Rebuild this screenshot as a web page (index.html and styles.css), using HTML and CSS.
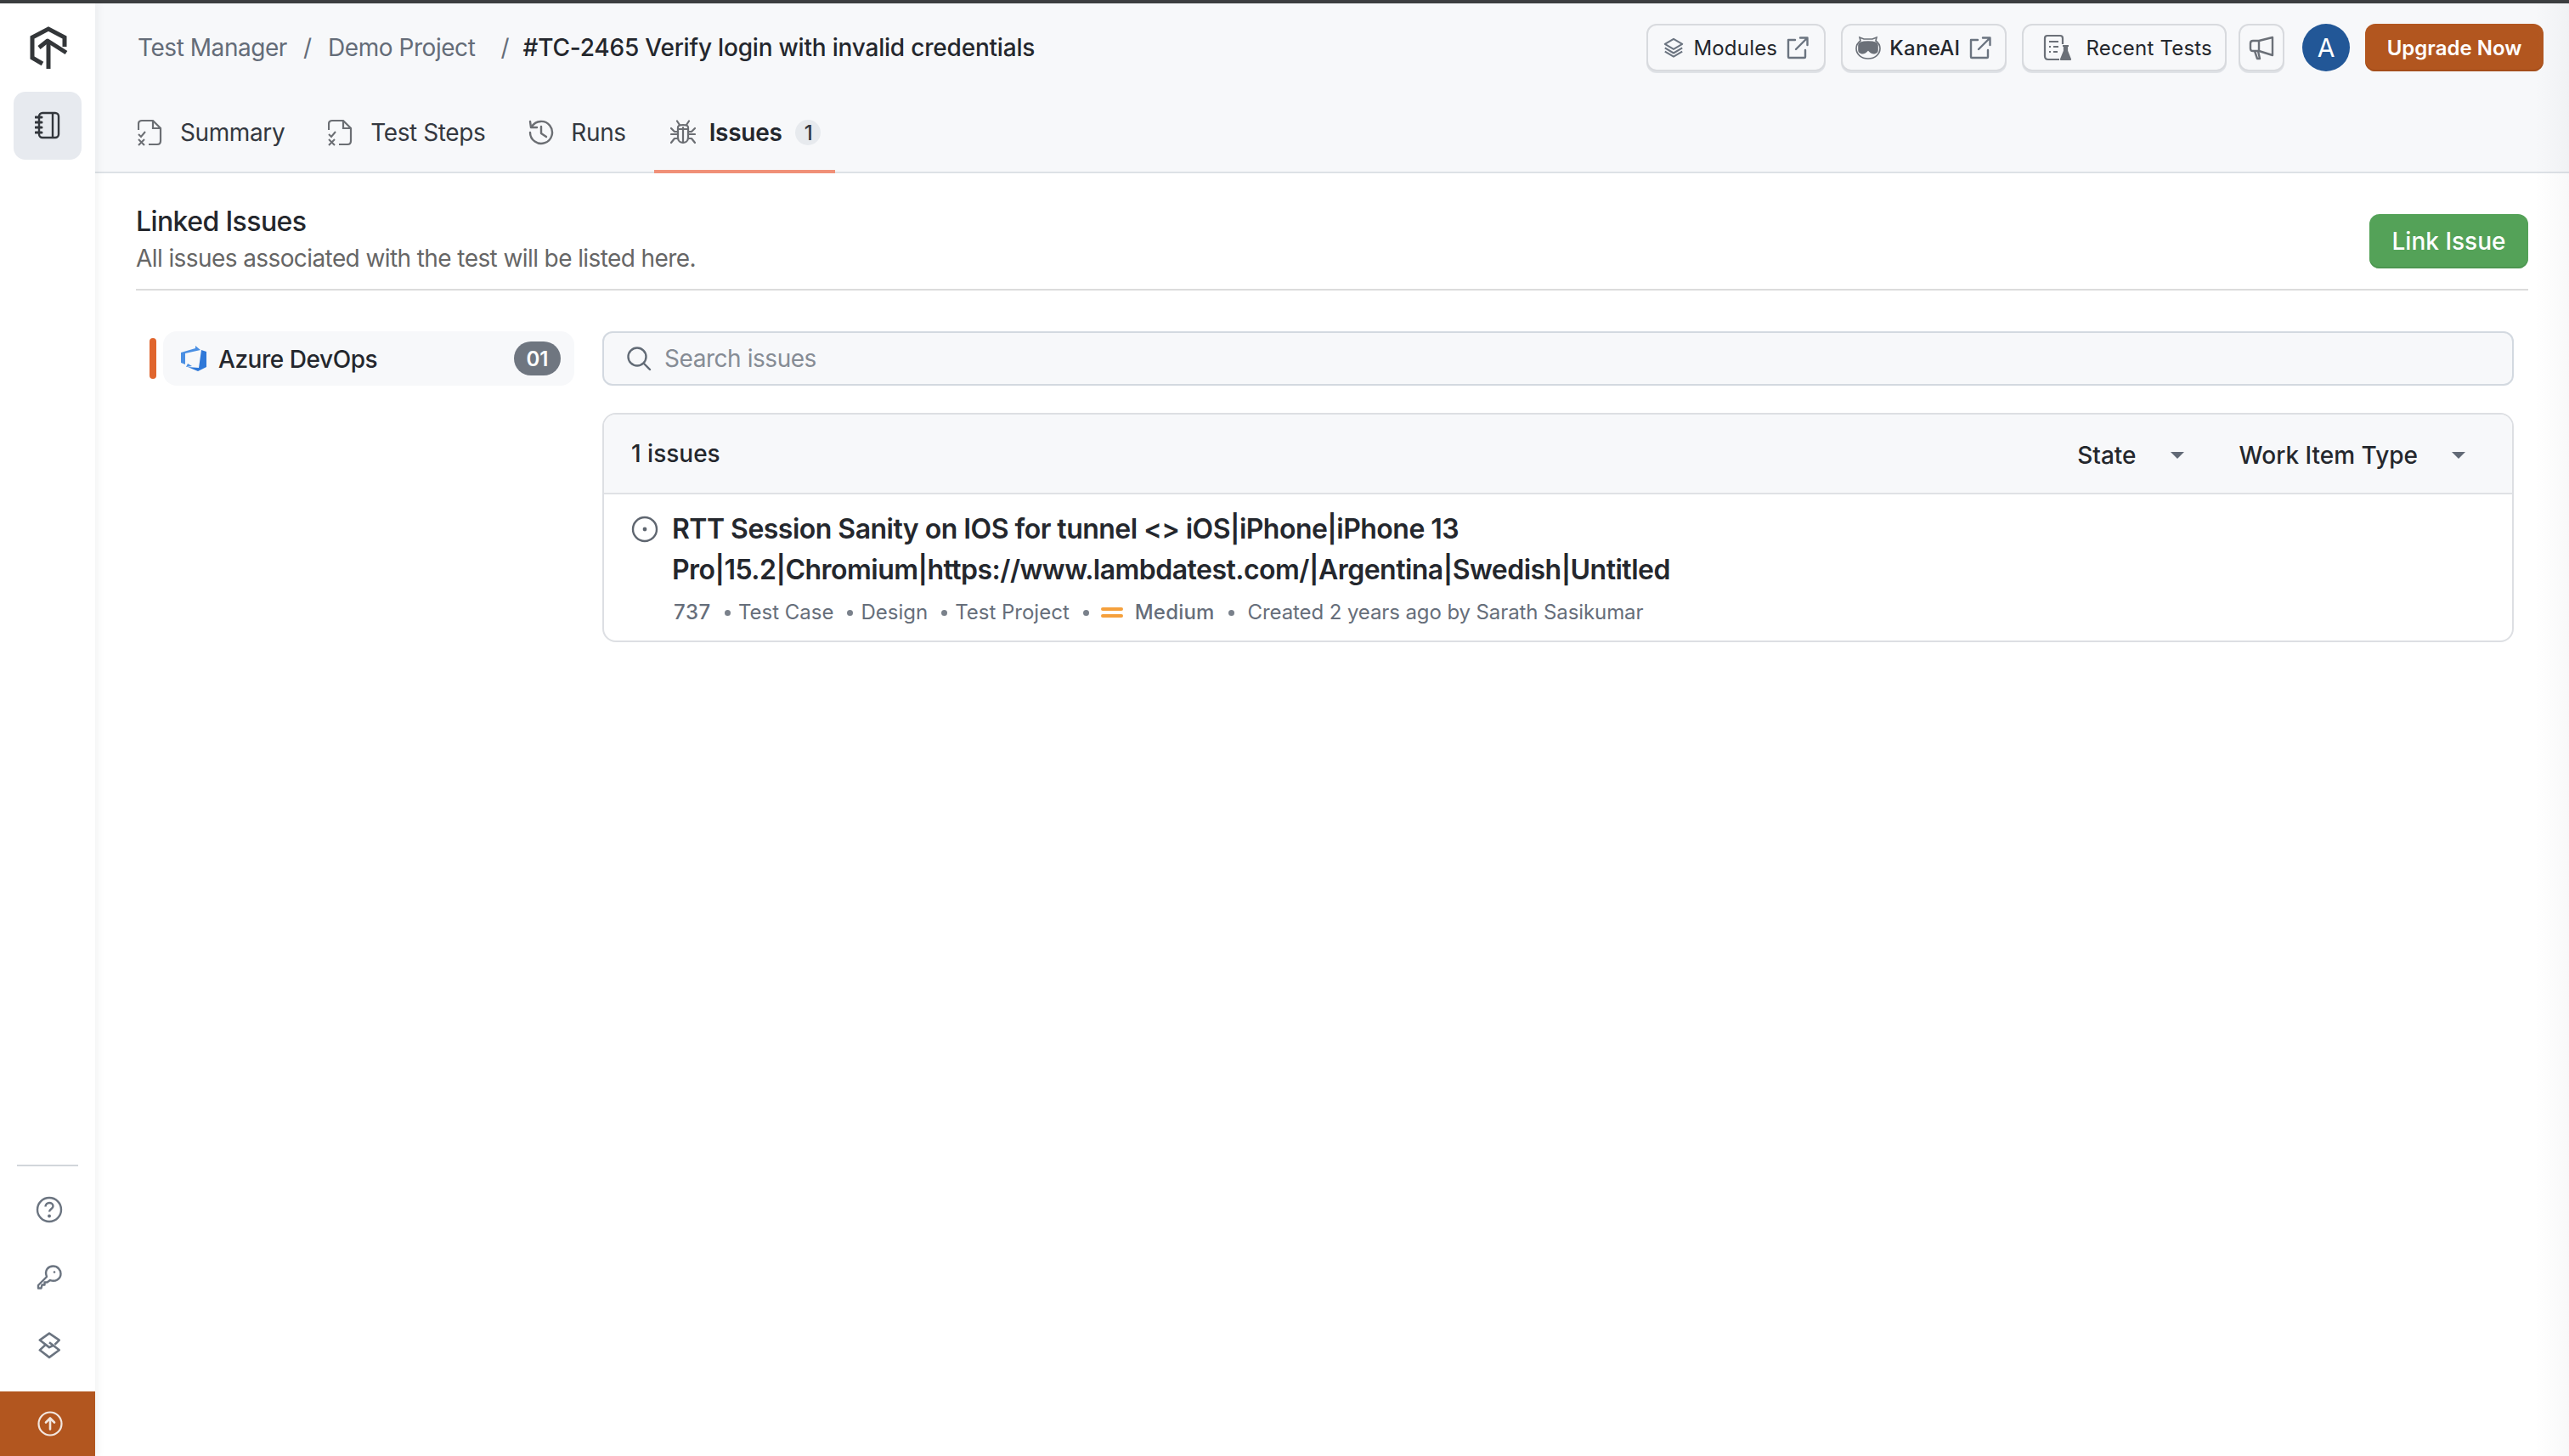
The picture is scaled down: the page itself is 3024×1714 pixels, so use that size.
FILE: index.html
```html
<!DOCTYPE html>
<html lang="en">
<head>
<meta charset="utf-8">
<title>Linked Issues</title>
<link rel="stylesheet" href="styles.css">
</head>
<body>
<div class="topline"></div>
<div class="app">
  <aside class="sidebar">
    <div class="logo">
      <svg width="46" height="50" viewBox="0 0 46 50" fill="none" stroke="#333639" stroke-width="5">
        <path d="M15 44 L3 37 V13 L22 3 L41 13 V24"/>
        <path d="M22 50 V20"/>
        <path d="M11 25 L21 17 L43 31" stroke-linejoin="round"/>
      </svg>
    </div>
    <div class="side-active">
      <svg width="30" height="34" viewBox="0 0 30 34" fill="none" stroke="#33373d" stroke-width="2.4">
        <rect x="5" y="2" width="23" height="29" rx="4"/>
        <path d="M21 2 V31"/>
        <path d="M1 7 H8 M1 13 H8 M1 19 H8 M1 25 H8" stroke-linecap="round" stroke-width="3"/>
      </svg>
    </div>
    <div class="side-spacer"></div>
    <div class="side-rule"></div>
    <div class="side-icons">
      <svg width="32" height="32" viewBox="0 0 32 32" fill="none" stroke="#6b7480" stroke-width="2.4">
        <circle cx="16" cy="16" r="14"/>
        <path d="M11.5 12.5 C11.5 6.5 20.5 6.5 20.5 12 C20.5 15 16 15.5 16 18.5"/>
        <circle cx="16" cy="23.5" r="2" fill="#6b7480" stroke="none"/>
      </svg>
      <svg width="30" height="30" viewBox="0 0 30 30" fill="none" stroke="#6b7480" stroke-width="2.4" stroke-linejoin="round">
        <path d="M2 24 L12 14 C9 6 14 1.500 19.500 1.500 C25 1.500 28.500 6 28.500 10.500 C28.500 16.500 22 20.500 16 18 L12.500 20.500 H9.500 V23.500 H6.500 L5.500 27.500 H2 Z"/>
        <circle cx="21" cy="8.500" r="1.300" fill="#6b7480" stroke="none"/>
      </svg>
      <svg width="26" height="32" viewBox="0 0 24 30" fill="none" stroke="#6b7480" stroke-width="2.4" stroke-linejoin="round">
        <path d="M18 14 L23 9 L12 1.500 L1.500 9 L12 17 L16 15"/>
        <path d="M8 14 L1.500 20 L12 28 L23 20 L12 11.500"/>
      </svg>
    </div>
    <div class="side-upgrade">
      <svg width="30" height="30" viewBox="0 0 30 30" fill="none" stroke="#f2e6df" stroke-width="2.2" stroke-linecap="round" stroke-linejoin="round">
        <circle cx="15" cy="15" r="13.500"/>
        <path d="M15 21.500 V9 M10 13.500 L15 8.500 L20 13.500" stroke-width="2.600"/>
      </svg>
    </div>
  </aside>

  <main class="main">
    <header class="header">
      <div class="header-top">
        <nav class="crumbs">
          <span class="crumb">Test Manager</span>
          <span class="crumb-sep">/</span>
          <span class="crumb">Demo Project</span>
          <span class="crumb-sep crumb-sep-last">/</span>
          <span class="crumb-current">#TC-2465 Verify login with invalid credentials</span>
        </nav>
        <div class="actions">
          <button class="btn btn-modules">
            <svg width="26" height="28" viewBox="0 0 28 28" fill="none" stroke="#6b7480" stroke-width="2.2" stroke-linejoin="round">
              <path d="M14 3 L25 9.500 L14 16 L3 9.500 Z"/>
              <path d="M3 14.500 L14 21 L25 14.500"/>
              <path d="M3 19 L14 25.500 L25 19"/>
            </svg>
            <span>Modules</span>
            <svg class="ext" width="28" height="28" viewBox="0 0 28 28" fill="none" stroke="#6b7480" stroke-width="2.400" stroke-linecap="round" stroke-linejoin="round">
              <path d="M11 5 H3 V25 Q3 26 4 26 H22 Q23 26 23 25 V17"/>
              <path d="M12 16 L25 3 M17 2.500 H25.500 V11"/>
            </svg>
          </button>
          <button class="btn btn-kane">
            <svg width="30" height="28" viewBox="0 0 30 28" fill="none" stroke="#6b7078" stroke-width="1.600">
              <path d="M6 6 L5 2 L10 4 H20 L25 2 L24 6 C28 9 29 13 29 15 C29 22 23 27 15 27 C7 27 1 22 1 15 C1 13 2 9 6 6 Z"/>
              <path d="M4 11 C4 8 8 7 15 7 C22 7 26 8 26 11 V17 C26 21 21 21 19 20 C17 19 16 17 15 17 C14 17 13 19 11 20 C9 21 4 21 4 17 Z" fill="#6b7078"/>
            </svg>
            <span class="kane-label">KaneAI</span>
            <svg class="ext" width="28" height="28" viewBox="0 0 28 28" fill="none" stroke="#6b7480" stroke-width="2.400" stroke-linecap="round" stroke-linejoin="round">
              <path d="M11 5 H3 V25 Q3 26 4 26 H22 Q23 26 23 25 V17"/>
              <path d="M12 16 L25 3 M17 2.500 H25.500 V11"/>
            </svg>
          </button>
          <button class="btn btn-recent">
            <svg width="34" height="32" viewBox="0 0 34 32" fill="none" stroke="#6b7078" stroke-width="2.200" stroke-linejoin="round">
              <path d="M19 30 H6 Q2 30 2 26 V5 Q2 2 5 2 H20 Q23 2 23 5 V12"/>
              <path d="M7 9 H18 M7 15 H9 M12 15 H18 M7 21 H9 M12 21 H17" />
              <path d="M23 14 H30 M25 14 V20 L21 30 H32 L28 20 V14" fill="#6b7078"/>
            </svg>
            <span>Recent Tests</span>
          </button>
          <button class="btn btn-icon">
            <svg width="30" height="30" viewBox="0 0 30 30" fill="none" stroke="#6b7078" stroke-width="2.400" stroke-linejoin="round">
              <path d="M28 3 V24 L12 19 H5 Q2 19 2 16 V10 Q2 7 5 7 H12 Z"/>
              <path d="M12 7 V19 M7 19 L10 28 H13 L11 19"/>
            </svg>
          </button>
          <div class="avatar">A</div>
          <button class="btn-upgrade">Upgrade Now</button>
        </div>
      </div>
      <div class="tabs">
        <div class="tab">
          <svg class="tab-icon" width="30" height="32" viewBox="0 0 30 32" fill="none" stroke="#6b6e73" stroke-width="2.200">
            <path d="M1 13 V6 Q1 2 5 2 H18 L27 11 V26 Q27 30 23 30 H13"/>
            <path d="M18 2 V11 H27"/>
            <path d="M1 18 L4 21 L9 15 M1 24 L8 31 M8 24 L1 31" stroke-width="2"/>
          </svg>
          <span>Summary</span>
        </div>
        <div class="tab">
          <svg class="tab-icon" width="30" height="32" viewBox="0 0 30 32" fill="none" stroke="#6b6e73" stroke-width="2.200">
            <path d="M1 13 V6 Q1 2 5 2 H18 L27 11 V26 Q27 30 23 30 H13"/>
            <path d="M18 2 V11 H27"/>
            <path d="M1 18 L4 21 L9 15 M1 24 L8 31 M8 24 L1 31" stroke-width="2"/>
          </svg>
          <span>Test Steps</span>
        </div>
        <div class="tab">
          <svg class="tab-icon" width="30" height="30" viewBox="0 0 30 30" fill="none" stroke="#6b6e73" stroke-width="2.400" stroke-linecap="round" stroke-linejoin="round">
            <path d="M4 8 A13 13 0 1 1 2 15"/>
            <path d="M2 2 L3 9 L10 9"/>
            <path d="M15 8 V16 L21 20"/>
          </svg>
          <span>Runs</span>
        </div>
        <div class="tab tab-active">
          <svg class="tab-icon" width="30" height="30" viewBox="0 0 30 30" fill="none" stroke="#6b6e73" stroke-width="2.200" stroke-linecap="round" stroke-linejoin="round">
            <path d="M8 1.500 L11 6 M22 1.500 L19 6"/>
            <path d="M9 9 C9 5 21 5 21 9 V21 C21 29 9 29 9 21 Z"/>
            <path d="M15 9 V27 M9 11 H21 M1 10 L5 14 H9 M29 10 L25 14 H21 M1 17 H9 M21 17 H29 M1 27 L5 22 H9 M29 27 L25 22 H21"/>
          </svg>
          <span class="tab-label">Issues</span>
          <span class="tab-count">1</span>
        </div>
      </div>
    </header>

    <section class="content">
      <div class="section-head">
        <div>
          <h1 class="section-title">Linked Issues</h1>
          <p class="section-sub">All issues associated with the test will be listed here.</p>
        </div>
        <button class="btn-link">Link Issue</button>
      </div>
      <div class="body-grid">
        <div class="providers">
          <span class="provider-mark"></span>
          <div class="provider">
            <svg width="30" height="30" viewBox="0 0 30 30">
              <path d="M0 8 L17 3 V0 L23 5 L5 9 V22 L0 20 Z" fill="#4a8fe3"/>
              <path d="M24 5 L30 7 V25 L20 30 L8 25 L21 26 Z" fill="#2f78d8"/>
              <path d="M6 25 L13 24 L8 21 Z" fill="#4a8fe3"/>
            </svg>
            <span class="provider-name">Azure DevOps</span>
            <span class="provider-count">01</span>
          </div>
        </div>
        <div class="issues-col">
          <div class="search">
            <svg width="30" height="30" viewBox="0 0 30 30" fill="none" stroke="#626b76" stroke-width="2.400" stroke-linecap="round">
              <circle cx="13" cy="13" r="10.500"/>
              <path d="M21 21 L28 28"/>
            </svg>
            <span class="search-text">Search issues</span>
          </div>
          <div class="panel">
            <div class="panel-head">
              <span class="panel-count">1 issues</span>
              <div class="filters">
                <div class="filter"><span>State</span><i class="caret"></i></div>
                <div class="filter"><span>Work Item Type</span><i class="caret"></i></div>
              </div>
            </div>
            <div class="issue">
              <svg class="issue-icon" width="32" height="32" viewBox="0 0 32 32" fill="none" stroke="#5f6670" stroke-width="2.400">
                <circle cx="16" cy="16" r="14"/>
                <circle cx="16" cy="16" r="2.400" fill="#5f6670" stroke="none"/>
              </svg>
              <div class="issue-body">
                <div class="issue-title">RTT Session Sanity on IOS for tunnel &lt;&gt; iOS|iPhone|iPhone 13 Pro|15.2|Chromium|https://www.lambdatest.com/|Argentina|Swedish|Untitled</div>
                <div class="issue-meta">
                  <span class="meta-id">737</span>
                  <span class="meta-dot"></span><span>Test Case</span>
                  <span class="meta-dot"></span><span>Design</span>
                  <span class="meta-dot"></span><span>Test Project</span>
                  <span class="meta-dot"></span>
                  <span class="prio"><i></i><i></i></span>
                  <span class="meta-prio">Medium</span>
                  <span class="meta-dot"></span>
                  <span class="meta-created">Created 2 years ago by Sarath Sasikumar</span>
                </div>
              </div>
            </div>
          </div>
        </div>
      </div>
    </section>
  </main>
</div>
<div class="edge-shade"></div>
</body>
</html>
```
FILE: styles.css
```css
* { box-sizing: border-box; }
html, body { height: 100%; }
body {
  margin: 0;
  background: #fff;
  color: #24272d;
  font-family: Inter, "Noto Sans", "Liberation Sans", sans-serif;
  font-size: 28px;
  overflow: hidden;
  position: relative;
}
button { font-family: inherit; cursor: pointer; }

.topline { height: 4px; background: #3c3e40; }
.app { display: flex; height: 1710px; }

/* Sidebar */
.sidebar {
  width: 112px;
  flex: none;
  display: flex;
  flex-direction: column;
  align-items: center;
  background: #fff;
  box-shadow: 4px 0 8px rgba(40, 50, 60, 0.05);
  position: relative;
  z-index: 1;
}
.logo { height: 104px; display: flex; align-items: center; justify-content: center; width: 100%; padding-left: 4px; }
.side-active {
  width: 80px;
  height: 80px;
  border-radius: 14px;
  background: #e7eaef;
  display: flex;
  align-items: center;
  justify-content: center;
}
.side-spacer { flex: 1; }
.side-rule { width: 72px; height: 2px; background: #d2d6db; }
.side-icons {
  display: flex;
  flex-direction: column;
  align-items: center;
  gap: 49px;
  padding: 35px 0 38px 4px;
}
.side-upgrade {
  width: 100%;
  height: 76px;
  background: #b2561f;
  display: flex;
  align-items: center;
  justify-content: center;
  padding-left: 6px;
}

/* Main */
.main { flex: 1; min-width: 0; display: flex; flex-direction: column; }
.header { background: #f7f8fa; border-bottom: 2px solid #dde1e6; height: 200px; padding-left: 50px; padding-right: 30px; display: flex; flex-direction: column; }
.header-top { height: 104px; display: flex; align-items: center; justify-content: space-between; flex: none; }
.crumbs { display: flex; align-items: center; font-size: 28px; }
.crumb { color: #646c78; letter-spacing: -0.45px; }
.crumb-sep { color: #646c78; margin: 0 19px; }
.crumb-sep-last { margin: 0 16px 0 30px; }
.crumb-current { font-weight: 500; color: #24272d; letter-spacing: -0.2px; }

.actions { display: flex; align-items: center; }
.btn {
  height: 56px;
  display: flex;
  align-items: center;
  gap: 10px;
  margin-right: 18px;
  background: #f7f8fa;
  border: 2px solid #d8dade;
  border-radius: 12px;
  box-shadow: 0 2px 0 #dfe2e6;
  font-size: 24px;
  letter-spacing: 0.2px;
  color: #24272d;
}
.btn-modules { padding: 0 17px 0 17px; }
.btn-kane { padding: 0 15px 0 15px; }
.kane-label { font-weight: 500; letter-spacing: 0.3px; }
.btn-recent { gap: 16px; padding: 0 15px 0 23px; margin-right: 14px; }
.btn-icon { width: 54px; padding: 0; justify-content: center; margin-right: 21px; }
.avatar {
  width: 56px;
  height: 56px;
  border-radius: 50%;
  background: #225797;
  color: #fff;
  display: flex;
  align-items: center;
  justify-content: center;
  font-size: 30px;
  margin-right: 18px;
}
.btn-upgrade {
  width: 210px;
  height: 56px;
  border: 0;
  border-radius: 12px;
  background: #b2561f;
  box-shadow: inset 0 -2px 0 #a54e1b;
  color: #fff;
  font-size: 24px;
  font-weight: 600;
  padding: 0;
}

.tabs { display: flex; margin-left: -18px; gap: 15px; }
.tab {
  display: flex;
  align-items: center;
  gap: 20px;
  padding: 4px 18px 0 18px;
  color: #343840;
  height: 96px;
  border-bottom: 4px solid transparent;
  letter-spacing: -0.4px;
  position: relative;
  z-index: 1;
}
.tab-active { border-bottom-color: #f09078; gap: 0; font-weight: 600; padding-left: 19px; padding-right: 17px; }
.tab-label { margin-left: 16px; color: #24272d; letter-spacing: -0.3px; }
.tab-count {
  width: 30px;
  height: 30px;
  margin-left: 16px;
  border-radius: 50%;
  background: #e7eaee;
  font-size: 24px;
  font-weight: 500;
  display: flex;
  align-items: center;
  justify-content: center;
}

/* Content */
.content { padding: 0 48px 0 48px; }
.section-head {
  height: 138px;
  border-bottom: 2px solid #dcdcdc;
  display: flex;
  align-items: flex-start;
  justify-content: space-between;
  padding-top: 36px;
}
.section-title { margin: 0; font-size: 32px; line-height: 42px; font-weight: 500; color: #24272d; letter-spacing: -0.6px; }
.section-sub { margin: 2px 0 0; font-size: 28px; line-height: 40px; color: #666; letter-spacing: -0.59px; }
.btn-link {
  width: 187px;
  height: 64px;
  margin-top: 12px;
  border: 0;
  border-radius: 12px;
  background: #54a258;
  box-shadow: inset 0 -2px 0 #4c9650;
  color: #fff;
  font-size: 28px;
  font-weight: 500;
}

.body-grid { display: flex; padding: 48px 17px 0 16px; }
.providers { width: 533px; flex: none; display: flex; align-items: center; align-self: flex-start; gap: 8px; }
.provider-mark { width: 8px; height: 48px; border-radius: 4px; background: #e0652d; flex: none; }
.provider {
  width: 484px;
  height: 64px;
  border-radius: 16px;
  background: #f7f8fa;
  display: flex;
  align-items: center;
  padding: 0 16px 0 21px;
}
.provider-name { margin-left: 14px; padding-top: 2px; font-weight: 500; color: #24272d; flex: 1; letter-spacing: -0.45px; }
.provider-count {
  width: 55px;
  height: 40px;
  border-radius: 20px;
  background: #6f7680;
  color: #fff;
  font-size: 24px;
  font-weight: 600;
  display: flex;
  align-items: center;
  justify-content: center;
}

.issues-col { flex: 1; min-width: 0; display: flex; flex-direction: column; gap: 32px; }
.search {
  height: 64px;
  border: 2px solid #d3d9e0;
  border-radius: 12px;
  background: #f7f8fa;
  display: flex;
  align-items: center;
  gap: 15px;
  padding-left: 26px;
}
.search-text { color: #868c95; letter-spacing: -0.45px; }

.panel { border: 2px solid #dddfe3; border-radius: 16px; overflow: hidden; }
.panel-head {
  height: 94px;
  background: #f7f8fa;
  border-bottom: 2px solid #dfe1e5;
  display: flex;
  align-items: center;
  justify-content: space-between;
  padding: 4px 55px 0 32px;
}
.panel-count { font-weight: 500; margin-top: -4px; }
.filters { display: flex; gap: 65px; }
.filter { display: flex; align-items: center; gap: 40px; font-weight: 500; }
.caret { width: 0; height: 0; border-left: 8px solid transparent; border-right: 8px solid transparent; border-top: 8px solid #626a76; }

.issue { display: flex; gap: 16px; padding: 17px 32px 13px 32px; }
.issue-icon { flex: none; margin-top: 8px; }
.issue-title { font-size: 32px; line-height: 48px; font-weight: 600; color: #24272d; max-width: 1200px; letter-spacing: -0.52px; }
.issue-meta {
  display: flex;
  align-items: center;
  font-size: 24px;
  line-height: 40px;
  color: #666e7a;
  margin-top: 6px;
  padding-left: 2px;
}
.meta-id { font-weight: 500; letter-spacing: 0.6px; }
.meta-dot { width: 7px; height: 7px; border-radius: 50%; background: #7a818b; margin: 0 9px 0 16px; flex: none; }
.prio { display: inline-flex; flex-direction: column; gap: 4px; margin: 0 14px 0 5px; }
.prio i { display: block; width: 26px; height: 4px; border-radius: 2px; background: #f5a03c; }
.meta-prio { font-weight: 500; letter-spacing: 0.2px; }
.meta-created { margin-left: 7px; letter-spacing: -0.1px; }

.edge-shade {
  position: absolute;
  top: 4px;
  right: 0;
  bottom: 0;
  width: 40px;
  background: linear-gradient(to right, rgba(120, 125, 135, 0), rgba(120, 125, 135, 0.05));
  pointer-events: none;
}
```
